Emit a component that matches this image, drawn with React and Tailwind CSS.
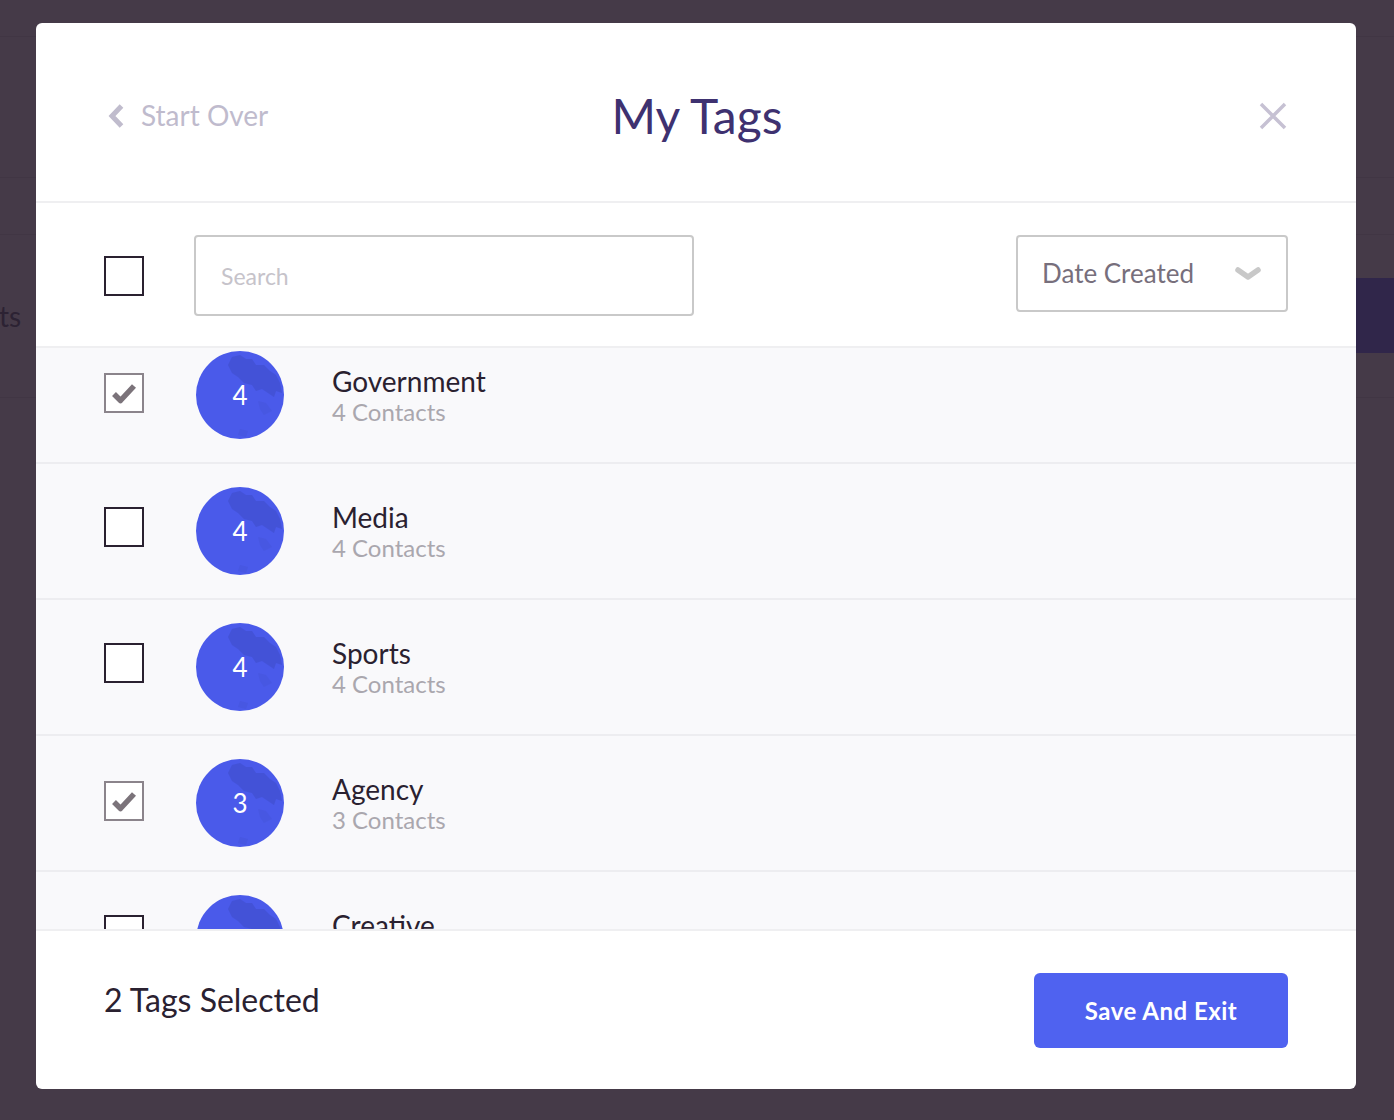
import { useEffect, useRef, useState } from "react";

const TAGS = [
  { name: "Government", count: 4, checked: true },
  { name: "Media", count: 4, checked: false },
  { name: "Sports", count: 4, checked: false },
  { name: "Agency", count: 3, checked: true },
  { name: "Creative", count: 2, checked: false },
  { name: "Finance", count: 2, checked: false },
];

function Checkbox({ checked, onClick }) {
  return (
    <button
      onClick={onClick}
      className={
        checked
          ? "w-10 h-10 shrink-0 border-2 border-[#8b848b] bg-white flex items-center justify-center"
          : "w-10 h-10 shrink-0 border-2 border-[#2a2130] bg-white"
      }
    >
      {checked && (
        <svg width="26" height="22" viewBox="0 0 26 22">
          <path
            d="M3 12 L9.5 18.5 L23 4"
            fill="none"
            stroke="#7b737a"
            strokeWidth="5.5"
            strokeLinejoin="round"
          />
        </svg>
      )}
    </button>
  );
}

function Avatar({ count }) {
  return (
    <div className="relative w-[88px] h-[88px] shrink-0 rounded-full overflow-hidden bg-[#4a5aea] flex items-center justify-center">
      <svg className="absolute inset-0" width="88" height="88" viewBox="0 0 88 88">
        <path
          d="M36 6 L44 4 L50 8 L56 8 L60 14 L68 14 L74 20 L80 24 L84 32 L86 42 L80 40 L78 46 L72 42 L66 38 L60 40 L56 34 L48 32 L42 26 L36 22 L32 14 Z"
          fill="#3e4dc6"
          opacity="0.55"
        />
        <path d="M62 50 L70 52 L76 60 L68 64 L64 58 Z" fill="#3f4ecb" opacity="0.25" />
        <path d="M44 78 L52 80 L50 86 L42 84 Z" fill="#3f4ecb" opacity="0.25" />
      </svg>
      <span className="relative text-white text-[26px] leading-none">{count}</span>
    </div>
  );
}

export default function App() {
  const [tags, setTags] = useState(TAGS);
  const listRef = useRef(null);

  useEffect(() => {
    if (listRef.current) listRef.current.scrollTop = 20;
  }, []);

  const toggle = (i) => {
    setTags(tags.map((t, j) => (j === i ? { ...t, checked: !t.checked } : t)));
  };

  const selected = tags.filter((t) => t.checked).length;

  return (
    <div
      className="relative w-full h-[1120px] overflow-hidden bg-[#453a48]"
      style={{ fontFamily: "Lato, 'Noto Sans', sans-serif" }}
    >
      {/* page behind the overlay */}
      <div className="flex flex-col">
        <div className="h-[37px] border-b border-[#413644]" />
        <div className="h-[141px] border-b border-[#413644]" />
        <div className="h-[57px] border-b border-[#413644]" />
        <div className="h-[43px]" />
        <div className="h-[75px] flex items-center justify-between">
          <span className="text-[28px] text-[#2c2233] -ml-[88px] whitespace-nowrap">Contacts</span>
          <div className="w-[120px] h-[75px] bg-[#30264a]" />
        </div>
        <div className="h-[45px] border-b border-[#413644]" />
      </div>

      {/* modal */}
      <div className="absolute left-[36px] top-[23px] w-[1320px] h-[1066px] bg-white rounded-[6px] flex flex-col overflow-hidden">
        {/* header */}
        <div className="h-[180px] shrink-0 border-b-2 border-[#efeff1] flex items-center justify-between pl-[72px] pr-[68px] pt-[8px]">
          <button className="flex items-center gap-[16px] w-[200px]">
            <svg width="17" height="26" viewBox="0 0 17 26">
              <path d="M13.5 3 L4 13 L13.5 23" fill="none" stroke="#c0bccd" strokeWidth="5" />
            </svg>
            <span className="text-[28px] text-[#bfbbcd] leading-[1.2]">Start Over</span>
          </button>
          <h1 className="text-[48px] text-[#3e3170] leading-[1.2] -ml-[2px]">My Tags</h1>
          <div className="w-[200px] flex justify-end">
            <svg width="30" height="30" viewBox="0 0 30 30">
              <path d="M3 3 L27 27 M27 3 L3 27" stroke="#c6c1d3" strokeWidth="3.5" />
            </svg>
          </div>
        </div>

        {/* toolbar */}
        <div className="h-[145px] shrink-0 border-b-2 border-[#efeff1] flex items-start pt-[32px] pl-[68px] pr-[68px]">
          <div className="h-[81px] flex items-center">
            <Checkbox checked={false} />
          </div>
          <input
            type="text"
            placeholder="Search"
            className="ml-[50px] w-[500px] h-[81px] border-2 border-[#c9c9c9] rounded-[4px] pl-[25px] text-[23px] text-[#2a2130] placeholder:text-[#c6c3ca] outline-none"
          />
          <div className="ml-auto w-[272px] h-[77px] border-2 border-[#c9c9c9] rounded-[4px] flex items-center justify-between pl-[24px] pr-[24px]">
            <span className="text-[26px] text-[#776f7c]">Date Created</span>
            <svg width="28" height="18" viewBox="0 0 28 18">
              <path d="M4 5 L14 12 L24 5" fill="none" stroke="#c8c8c8" strokeWidth="5.5" strokeLinecap="round" strokeLinejoin="round" />
            </svg>
          </div>
        </div>

        {/* list */}
        <div ref={listRef} className="flex-1 overflow-y-auto [scrollbar-width:none] bg-[#f9f9fb]">
          {tags.map((t, i) => (
            <div
              key={t.name}
              className="h-[136px] border-b-2 border-[#ededf0] flex items-center pl-[68px]"
            >
              <div className="-mt-[4px]">
                <Checkbox checked={t.checked} onClick={() => toggle(i)} />
              </div>
              <div className="ml-[52px]">
                <Avatar count={t.count} />
              </div>
              <div className="ml-[48px] flex flex-col pt-[4px]">
                <span className="text-[28px] leading-[30px] text-[#2a2130]">{t.name}</span>
                <span className="text-[24px] leading-[32px] text-[#aaa7ae]">
                  {t.count} Contacts
                </span>
              </div>
            </div>
          ))}
        </div>

        {/* footer */}
        <div className="h-[160px] shrink-0 border-t-2 border-[#efeff1] flex items-start justify-between pl-[68px] pr-[68px] pt-[42px]">
          <span className="mt-[8px] text-[32px] leading-[1.2] text-[#2a2130]">
            {selected} Tags Selected
          </span>
          <button className="w-[254px] h-[75px] rounded-[6px] bg-[#4f62f0] text-white text-[24px] font-bold tracking-[0.5px]">
            Save And Exit
          </button>
        </div>
      </div>
    </div>
  );
}
